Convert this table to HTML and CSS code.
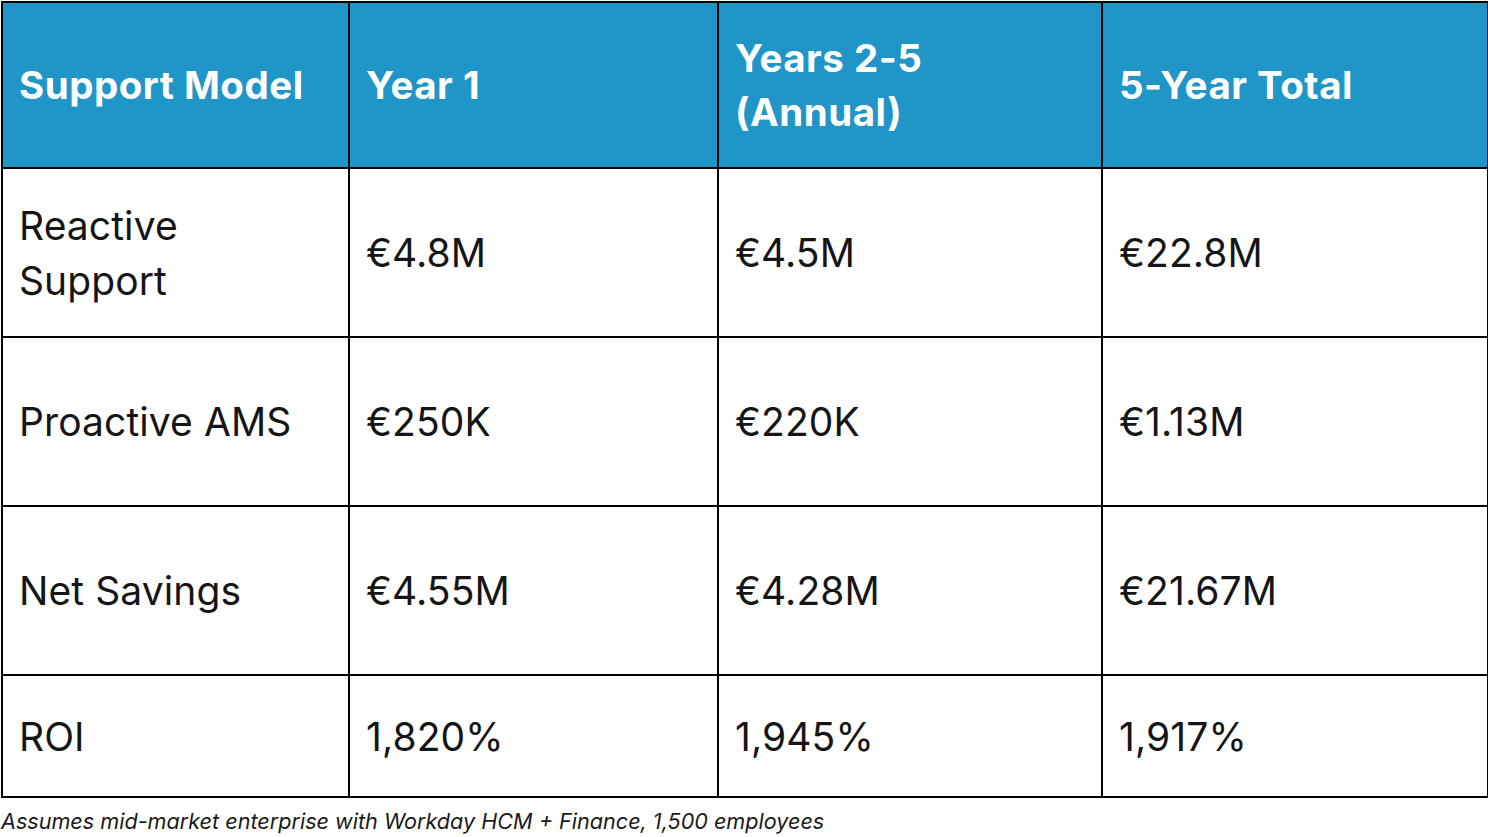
FILE: index.html
```html
<!DOCTYPE html>
<html>
<head>
<meta charset="utf-8">
<link rel="stylesheet" href="styles.css">
</head>
<body>
<table class="cost-table">
  <colgroup>
    <col class="c1"><col class="c2"><col class="c3"><col class="c4">
  </colgroup>
  <thead>
    <tr class="head-row">
      <th>Support Model</th>
      <th>Year 1</th>
      <th>Years 2-5<br>(Annual)</th>
      <th>5-Year Total</th>
    </tr>
  </thead>
  <tbody>
    <tr class="row">
      <td>Reactive<br>Support</td>
      <td>€4.8M</td>
      <td>€4.5M</td>
      <td>€22.8M</td>
    </tr>
    <tr class="row">
      <td>Proactive AMS</td>
      <td>€250K</td>
      <td>€220K</td>
      <td>€1.13M</td>
    </tr>
    <tr class="row">
      <td>Net Savings</td>
      <td>€4.55M</td>
      <td>€4.28M</td>
      <td>€21.67M</td>
    </tr>
    <tr class="row last">
      <td>ROI</td>
      <td>1,820%</td>
      <td>1,945%</td>
      <td>1,917%</td>
    </tr>
  </tbody>
</table>
<p class="note">Assumes mid-market enterprise with Workday HCM + Finance, 1,500 employees</p>
</body>
</html>
```
FILE: styles.css
```css
html, body {
  margin: 0;
  padding: 0;
  background: #ffffff;
}
body {
  font-family: Inter, "Noto Sans", sans-serif;
  color: #111111;
  padding-top: 1px;
  padding-left: 1px;
}
.cost-table {
  width: 1486px;
  border-collapse: collapse;
  table-layout: fixed;
}
.c1 { width: 347px; }
.c2 { width: 369px; }
.c3 { width: 384px; }
.c4 { width: 386px; }
.cost-table th,
.cost-table td {
  border: 2.5px solid #000000;
  padding: 0 16px;
  vertical-align: middle;
  text-align: left;
}
.cost-table th {
  background: #2095c8;
  color: #ffffff;
  font-weight: 700;
  font-size: 38.5px;
  line-height: 54px;
  letter-spacing: 0.5px;
}
.cost-table td {
  font-size: 39px;
  font-weight: 400;
  line-height: 55px;
  letter-spacing: 0.1px;
  color: #151515;
}
.head-row { height: 166px; }
.row { height: 169px; }
.row.last { height: 122px; }
.note {
  margin: 8px 0 0 0;
  font-size: 21.6px;
  font-style: italic;
  color: #1a1a1a;
  line-height: 30px;
}
```
